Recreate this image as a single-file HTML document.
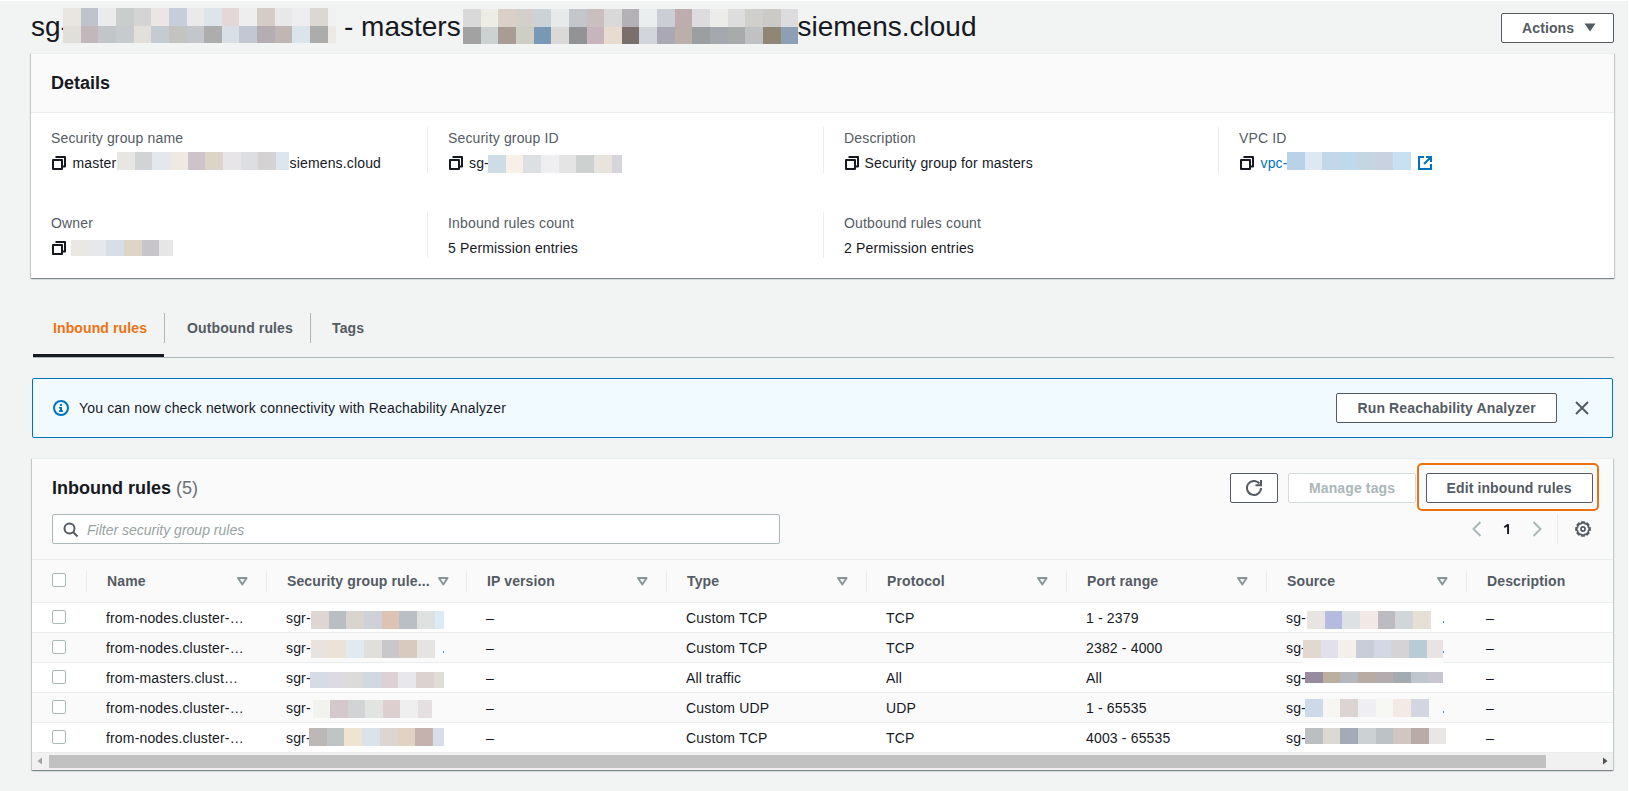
<!DOCTYPE html><html><head><meta charset="utf-8"><style>
html,body{margin:0;padding:0;}
body{width:1629px;height:791px;position:relative;overflow:hidden;background:#f2f3f3;font-family:"Liberation Sans",sans-serif;}
.t{position:absolute;white-space:nowrap;line-height:1;}
</style></head><body>
<div class="t" style="left:31px;top:13.20px;font-size:28px;color:#16191f;">sg-</div>
<div style="position:absolute;left:63px;top:8px;width:18px;height:18px;background:#e9e5e1"></div>
<div style="position:absolute;left:81px;top:8px;width:17px;height:18px;background:#bfc3cc"></div>
<div style="position:absolute;left:98px;top:8px;width:18px;height:18px;background:#ebebee"></div>
<div style="position:absolute;left:116px;top:8px;width:18px;height:18px;background:#c9cdcb"></div>
<div style="position:absolute;left:134px;top:8px;width:17px;height:18px;background:#d4d4d4"></div>
<div style="position:absolute;left:151px;top:8px;width:18px;height:18px;background:#ebe6e3"></div>
<div style="position:absolute;left:169px;top:8px;width:18px;height:18px;background:#c8cdda"></div>
<div style="position:absolute;left:187px;top:8px;width:17px;height:18px;background:#eaeaea"></div>
<div style="position:absolute;left:204px;top:8px;width:18px;height:18px;background:#dde4ea"></div>
<div style="position:absolute;left:222px;top:8px;width:17px;height:18px;background:#e3d8d7"></div>
<div style="position:absolute;left:239px;top:8px;width:18px;height:18px;background:#eeeeee"></div>
<div style="position:absolute;left:257px;top:8px;width:18px;height:18px;background:#d6ccc7"></div>
<div style="position:absolute;left:275px;top:8px;width:17px;height:18px;background:#e7e8e7"></div>
<div style="position:absolute;left:292px;top:8px;width:18px;height:18px;background:#eeeef0"></div>
<div style="position:absolute;left:310px;top:8px;width:18px;height:18px;background:#dbd8d3"></div>
<div style="position:absolute;left:328px;top:8px;width:8px;height:18px;background:#f1f1f1"></div>
<div style="position:absolute;left:63px;top:26px;width:18px;height:17px;background:#e0dfda"></div>
<div style="position:absolute;left:81px;top:26px;width:17px;height:17px;background:#c2b7ba"></div>
<div style="position:absolute;left:98px;top:26px;width:18px;height:17px;background:#c3c6c9"></div>
<div style="position:absolute;left:116px;top:26px;width:18px;height:17px;background:#c6cbcd"></div>
<div style="position:absolute;left:134px;top:26px;width:17px;height:17px;background:#e3dfdb"></div>
<div style="position:absolute;left:151px;top:26px;width:18px;height:17px;background:#c4cbd2"></div>
<div style="position:absolute;left:169px;top:26px;width:18px;height:17px;background:#c3c4c2"></div>
<div style="position:absolute;left:187px;top:26px;width:17px;height:17px;background:#c3c6ca"></div>
<div style="position:absolute;left:204px;top:26px;width:18px;height:17px;background:#aeadae"></div>
<div style="position:absolute;left:222px;top:26px;width:17px;height:17px;background:#d8e0e6"></div>
<div style="position:absolute;left:239px;top:26px;width:18px;height:17px;background:#c1c7d3"></div>
<div style="position:absolute;left:257px;top:26px;width:18px;height:17px;background:#b4aeb3"></div>
<div style="position:absolute;left:275px;top:26px;width:17px;height:17px;background:#c0b6b4"></div>
<div style="position:absolute;left:292px;top:26px;width:18px;height:17px;background:#d9e4eb"></div>
<div style="position:absolute;left:310px;top:26px;width:18px;height:17px;background:#acadab"></div>
<div style="position:absolute;left:328px;top:26px;width:8px;height:17px;background:#ede9e5"></div>
<div class="t" style="left:344px;top:13.20px;font-size:28px;color:#16191f;">- masters</div>
<div style="position:absolute;left:463px;top:9px;width:18px;height:18px;background:#d9d9d9"></div>
<div style="position:absolute;left:481px;top:9px;width:17px;height:18px;background:#edede5"></div>
<div style="position:absolute;left:498px;top:9px;width:18px;height:18px;background:#d9d0ca"></div>
<div style="position:absolute;left:516px;top:9px;width:18px;height:18px;background:#d3d0cc"></div>
<div style="position:absolute;left:534px;top:9px;width:17px;height:18px;background:#ccd3d7"></div>
<div style="position:absolute;left:551px;top:9px;width:18px;height:18px;background:#e6eaea"></div>
<div style="position:absolute;left:569px;top:9px;width:18px;height:18px;background:#c3c6cb"></div>
<div style="position:absolute;left:587px;top:9px;width:17px;height:18px;background:#cbbebe"></div>
<div style="position:absolute;left:604px;top:9px;width:18px;height:18px;background:#d8d9d8"></div>
<div style="position:absolute;left:622px;top:9px;width:17px;height:18px;background:#b3b0b6"></div>
<div style="position:absolute;left:639px;top:9px;width:18px;height:18px;background:#eaeeee"></div>
<div style="position:absolute;left:657px;top:9px;width:18px;height:18px;background:#ccced6"></div>
<div style="position:absolute;left:675px;top:9px;width:17px;height:18px;background:#bfadad"></div>
<div style="position:absolute;left:692px;top:9px;width:18px;height:18px;background:#dcdcdf"></div>
<div style="position:absolute;left:710px;top:9px;width:18px;height:18px;background:#ececea"></div>
<div style="position:absolute;left:728px;top:9px;width:17px;height:18px;background:#dcdddc"></div>
<div style="position:absolute;left:745px;top:9px;width:18px;height:18px;background:#cfd0cb"></div>
<div style="position:absolute;left:763px;top:9px;width:18px;height:18px;background:#cbcac7"></div>
<div style="position:absolute;left:781px;top:9px;width:17px;height:18px;background:#dcdcdf"></div>
<div style="position:absolute;left:463px;top:27px;width:18px;height:17px;background:#a2a2a2"></div>
<div style="position:absolute;left:481px;top:27px;width:17px;height:17px;background:#ccd1d2"></div>
<div style="position:absolute;left:498px;top:27px;width:18px;height:17px;background:#a89c94"></div>
<div style="position:absolute;left:516px;top:27px;width:18px;height:17px;background:#cfcec5"></div>
<div style="position:absolute;left:534px;top:27px;width:17px;height:17px;background:#7799b5"></div>
<div style="position:absolute;left:551px;top:27px;width:18px;height:17px;background:#dad9d8"></div>
<div style="position:absolute;left:569px;top:27px;width:18px;height:17px;background:#929395"></div>
<div style="position:absolute;left:587px;top:27px;width:17px;height:17px;background:#c7b5bd"></div>
<div style="position:absolute;left:604px;top:27px;width:18px;height:17px;background:#e8dcd0"></div>
<div style="position:absolute;left:622px;top:27px;width:17px;height:17px;background:#7b6f6b"></div>
<div style="position:absolute;left:639px;top:27px;width:18px;height:17px;background:#d2d6da"></div>
<div style="position:absolute;left:657px;top:27px;width:18px;height:17px;background:#a9a8b4"></div>
<div style="position:absolute;left:675px;top:27px;width:17px;height:17px;background:#bcaea9"></div>
<div style="position:absolute;left:692px;top:27px;width:18px;height:17px;background:#9b9fa2"></div>
<div style="position:absolute;left:710px;top:27px;width:18px;height:17px;background:#a6a8b0"></div>
<div style="position:absolute;left:728px;top:27px;width:17px;height:17px;background:#a7abab"></div>
<div style="position:absolute;left:745px;top:27px;width:18px;height:17px;background:#bfc1c2"></div>
<div style="position:absolute;left:763px;top:27px;width:18px;height:17px;background:#8f8673"></div>
<div style="position:absolute;left:781px;top:27px;width:17px;height:17px;background:#8c9fb5"></div>
<div class="t" style="left:797.5px;top:13.20px;font-size:28px;color:#16191f;">siemens.cloud</div>
<div style="position:absolute;left:1501px;top:13px;width:113px;height:30px;box-sizing:border-box;border:1px solid #545b64;border-radius:2px;background:#fff"></div>
<div class="t" style="left:1522px;top:21.05px;font-size:14px;color:#545b64;font-weight:bold;letter-spacing:0.12px;">Actions</div>
<svg width="12" height="9" viewBox="0 0 12 9" style="position:absolute;left:1584px;top:23px"><path d="M0.5 0.5h11L6 8.5z" fill="#545b64"/></svg>
<div style="position:absolute;left:31px;top:53px;width:1583px;height:225px;box-sizing:border-box;border-top:1px solid #eaeded;background:#fff;box-shadow:0 1px 1px 0 rgba(0,28,36,.3),1px 1px 1px 0 rgba(0,28,36,.15),-1px 1px 1px 0 rgba(0,28,36,.15)"></div>
<div style="position:absolute;left:31px;top:54px;width:1583px;height:58px;background:#fafafa;border-bottom:1px solid #eaeded"></div>
<div class="t" style="left:51px;top:73.56px;font-size:18px;color:#16191f;font-weight:bold;">Details</div>
<div style="position:absolute;left:427px;top:127px;width:1px;height:46px;background:#eaeded"></div>
<div style="position:absolute;left:427px;top:212px;width:1px;height:46px;background:#eaeded"></div>
<div style="position:absolute;left:823px;top:127px;width:1px;height:46px;background:#eaeded"></div>
<div style="position:absolute;left:823px;top:212px;width:1px;height:46px;background:#eaeded"></div>
<div style="position:absolute;left:1218px;top:127px;width:1px;height:46px;background:#eaeded"></div>
<div class="t" style="left:51px;top:131.35px;font-size:14px;color:#545b64;letter-spacing:0.16px;">Security group name</div>
<svg width="14" height="14" viewBox="0 0 14 14" style="position:absolute;left:52px;top:156px"><path d="M3.5 1h9.5v9.5h-3M1 4h9v9H1z" fill="none" stroke="#16191f" stroke-width="2" stroke-linejoin="round"/></svg>
<div class="t" style="left:72.5px;top:156.15px;font-size:14px;color:#16191f;letter-spacing:0.16px;">master</div>
<div style="position:absolute;left:117px;top:152px;width:18px;height:18px;background:#e8e6e2"></div>
<div style="position:absolute;left:135px;top:152px;width:17px;height:18px;background:#d0d4d7"></div>
<div style="position:absolute;left:152px;top:152px;width:18px;height:18px;background:#e3e8ef"></div>
<div style="position:absolute;left:170px;top:152px;width:18px;height:18px;background:#efe9e2"></div>
<div style="position:absolute;left:188px;top:152px;width:17px;height:18px;background:#cdc3cb"></div>
<div style="position:absolute;left:205px;top:152px;width:18px;height:18px;background:#dcd3c9"></div>
<div style="position:absolute;left:223px;top:152px;width:18px;height:18px;background:#e7e5e8"></div>
<div style="position:absolute;left:241px;top:152px;width:17px;height:18px;background:#dddee2"></div>
<div style="position:absolute;left:258px;top:152px;width:18px;height:18px;background:#d4d2d3"></div>
<div style="position:absolute;left:276px;top:152px;width:13px;height:18px;background:#dde6ee"></div>
<div class="t" style="left:289.5px;top:156.15px;font-size:14px;color:#16191f;letter-spacing:0.16px;">siemens.cloud</div>
<div class="t" style="left:448px;top:131.35px;font-size:14px;color:#545b64;letter-spacing:0.16px;">Security group ID</div>
<svg width="14" height="14" viewBox="0 0 14 14" style="position:absolute;left:449px;top:156px"><path d="M3.5 1h9.5v9.5h-3M1 4h9v9H1z" fill="none" stroke="#16191f" stroke-width="2" stroke-linejoin="round"/></svg>
<div class="t" style="left:469px;top:156.15px;font-size:14px;color:#16191f;letter-spacing:0.16px;">sg-</div>
<div style="position:absolute;left:488px;top:155px;width:18px;height:18px;background:#cddde8"></div>
<div style="position:absolute;left:506px;top:155px;width:17px;height:18px;background:#f8f0e6"></div>
<div style="position:absolute;left:523px;top:155px;width:18px;height:18px;background:#dce0e3"></div>
<div style="position:absolute;left:541px;top:155px;width:18px;height:18px;background:#efeff1"></div>
<div style="position:absolute;left:559px;top:155px;width:17px;height:18px;background:#e4e4e4"></div>
<div style="position:absolute;left:576px;top:155px;width:18px;height:18px;background:#cdd1d0"></div>
<div style="position:absolute;left:594px;top:155px;width:18px;height:18px;background:#e8e3dc"></div>
<div style="position:absolute;left:612px;top:155px;width:10px;height:18px;background:#d6d5db"></div>
<div class="t" style="left:844px;top:131.35px;font-size:14px;color:#545b64;letter-spacing:0.16px;">Description</div>
<svg width="14" height="14" viewBox="0 0 14 14" style="position:absolute;left:845px;top:156px"><path d="M3.5 1h9.5v9.5h-3M1 4h9v9H1z" fill="none" stroke="#16191f" stroke-width="2" stroke-linejoin="round"/></svg>
<div class="t" style="left:864.5px;top:156.15px;font-size:14px;color:#16191f;letter-spacing:0.16px;">Security group for masters</div>
<div class="t" style="left:1239px;top:131.35px;font-size:14px;color:#545b64;letter-spacing:0.16px;">VPC ID</div>
<svg width="14" height="14" viewBox="0 0 14 14" style="position:absolute;left:1240px;top:156px"><path d="M3.5 1h9.5v9.5h-3M1 4h9v9H1z" fill="none" stroke="#16191f" stroke-width="2" stroke-linejoin="round"/></svg>
<div class="t" style="left:1260.5px;top:156.15px;font-size:14px;color:#0073bb;letter-spacing:0.16px;">vpc-</div>
<div style="position:absolute;left:1287px;top:152px;width:18px;height:18px;background:#b8d2e8"></div>
<div style="position:absolute;left:1305px;top:152px;width:17px;height:18px;background:#dce8f2"></div>
<div style="position:absolute;left:1322px;top:152px;width:18px;height:18px;background:#c2d7ea"></div>
<div style="position:absolute;left:1340px;top:152px;width:18px;height:18px;background:#bed9e9"></div>
<div style="position:absolute;left:1358px;top:152px;width:17px;height:18px;background:#c3d7e3"></div>
<div style="position:absolute;left:1375px;top:152px;width:18px;height:18px;background:#c9d2e1"></div>
<div style="position:absolute;left:1393px;top:152px;width:18px;height:18px;background:#c8e0f1"></div>
<svg width="14" height="14" viewBox="0 0 14 14" style="position:absolute;left:1418px;top:156px"><path d="M6 1H1v12h12V8M8 1h5v5M13 1L6 8" fill="none" stroke="#0073bb" stroke-width="2"/></svg>
<div class="t" style="left:51px;top:216.35px;font-size:14px;color:#545b64;letter-spacing:0.16px;">Owner</div>
<svg width="14" height="14" viewBox="0 0 14 14" style="position:absolute;left:52px;top:241px"><path d="M3.5 1h9.5v9.5h-3M1 4h9v9H1z" fill="none" stroke="#16191f" stroke-width="2" stroke-linejoin="round"/></svg>
<div style="position:absolute;left:71px;top:240px;width:18px;height:16px;background:#ebe8e3"></div>
<div style="position:absolute;left:89px;top:240px;width:17px;height:16px;background:#e5e9ec"></div>
<div style="position:absolute;left:106px;top:240px;width:18px;height:16px;background:#d6dee6"></div>
<div style="position:absolute;left:124px;top:240px;width:18px;height:16px;background:#ded5c9"></div>
<div style="position:absolute;left:142px;top:240px;width:17px;height:16px;background:#c7c5ca"></div>
<div style="position:absolute;left:159px;top:240px;width:14px;height:16px;background:#e6e6e6"></div>
<div class="t" style="left:448px;top:216.35px;font-size:14px;color:#545b64;letter-spacing:0.16px;">Inbound rules count</div>
<div class="t" style="left:448px;top:241.25px;font-size:14px;color:#16191f;letter-spacing:0.16px;">5 Permission entries</div>
<div class="t" style="left:844px;top:216.35px;font-size:14px;color:#545b64;letter-spacing:0.16px;">Outbound rules count</div>
<div class="t" style="left:844px;top:241.25px;font-size:14px;color:#16191f;letter-spacing:0.16px;">2 Permission entries</div>
<div style="position:absolute;left:33px;top:357px;width:1581px;height:1px;background:#aab7b8"></div>
<div style="position:absolute;left:33px;top:354px;width:131px;height:3px;background:#16191f"></div>
<div style="position:absolute;left:164px;top:313px;width:1px;height:30px;background:#aab7b8"></div>
<div style="position:absolute;left:310px;top:313px;width:1px;height:30px;background:#aab7b8"></div>
<div class="t" style="left:53px;top:320.95px;font-size:14px;color:#ec7211;font-weight:bold;letter-spacing:0.12px;">Inbound rules</div>
<div class="t" style="left:187px;top:320.95px;font-size:14px;color:#545b64;font-weight:bold;letter-spacing:0.12px;">Outbound rules</div>
<div class="t" style="left:332px;top:320.95px;font-size:14px;color:#545b64;font-weight:bold;letter-spacing:0.12px;">Tags</div>
<div style="position:absolute;left:32px;top:378px;width:1581px;height:60px;box-sizing:border-box;border:1px solid #0073bb;border-radius:2px;background:#f1faff"></div>
<svg width="16" height="16" viewBox="0 0 16 16" style="position:absolute;left:53px;top:400px"><circle cx="8" cy="8" r="7" fill="none" stroke="#0073bb" stroke-width="2"/><rect x="7" y="4" width="2" height="1.9" fill="#0073bb"/><rect x="6" y="7" width="3" height="1.5" fill="#0073bb"/><rect x="7" y="7" width="2" height="4.5" fill="#0073bb"/><rect x="6" y="10.2" width="4" height="1.7" fill="#0073bb"/></svg>
<div class="t" style="left:79px;top:401.05px;font-size:14px;color:#16191f;letter-spacing:0.16px;">You can now check network connectivity with Reachability Analyzer</div>
<div style="position:absolute;left:1336px;top:393px;width:221px;height:30px;box-sizing:border-box;border:1px solid #545b64;border-radius:2px;background:#fff"></div>
<div class="t" style="left:1357.5px;top:401.05px;font-size:14px;color:#545b64;font-weight:bold;letter-spacing:0.12px;">Run Reachability Analyzer</div>
<svg width="14" height="14" viewBox="0 0 14 14" style="position:absolute;left:1575px;top:401px"><path d="M1 1l12 12M13 1L1 13" fill="none" stroke="#545b64" stroke-width="2"/></svg>
<div style="position:absolute;left:32px;top:458px;width:1581px;height:312px;box-sizing:border-box;border-top:1px solid #eaeded;background:#fafafa;box-shadow:0 1px 1px 0 rgba(0,28,36,.3),1px 1px 1px 0 rgba(0,28,36,.15),-1px 1px 1px 0 rgba(0,28,36,.15)"></div>
<div class="t" style="left:52px;top:478.96px;font-size:18px;color:#16191f;font-weight:bold;">Inbound rules <span style="font-weight:normal;color:#687078">(5)</span></div>
<div style="position:absolute;left:1230px;top:473px;width:48px;height:30px;box-sizing:border-box;border:1px solid #545b64;border-radius:2px;background:#fff"></div>
<svg width="16" height="16" viewBox="0 0 16 16" style="position:absolute;left:1246px;top:480px"><path d="M15 8A7 7 0 1 1 13.4 3.5" fill="none" stroke="#545b64" stroke-width="2"/><path d="M9.5 5.2H15V0" fill="none" stroke="#545b64" stroke-width="2"/></svg>
<div style="position:absolute;left:1288px;top:473px;width:128px;height:30px;box-sizing:border-box;border:1px solid #d5dbdb;border-radius:2px;background:#fff"></div>
<div class="t" style="left:1309px;top:481.45px;font-size:14px;color:#aab7b8;font-weight:bold;letter-spacing:0.12px;">Manage tags</div>
<div style="position:absolute;left:1417px;top:463px;width:182px;height:48px;box-sizing:border-box;border:2px solid #ec7211;border-radius:5px"></div>
<div style="position:absolute;left:1426px;top:473px;width:167px;height:30px;box-sizing:border-box;border:1px solid #545b64;border-radius:2px;background:#fff"></div>
<div class="t" style="left:1446.5px;top:481.45px;font-size:14px;color:#545b64;font-weight:bold;letter-spacing:0.12px;">Edit inbound rules</div>
<div style="position:absolute;left:52px;top:514px;width:728px;height:30px;box-sizing:border-box;border:1px solid #aab7b8;border-radius:2px;background:#fff"></div>
<svg width="16" height="16" viewBox="0 0 16 16" style="position:absolute;left:62.5px;top:521.5px"><circle cx="6.5" cy="6.5" r="5" fill="none" stroke="#545b64" stroke-width="2"/><path d="M10 10l4.5 4.5" stroke="#545b64" stroke-width="2"/></svg>
<div class="t" style="left:87px;top:522.65px;font-size:14px;color:#97a3a4;font-style:italic;">Filter security group rules</div>
<svg width="10" height="16" viewBox="0 0 10 16" style="position:absolute;left:1472px;top:521px"><path d="M8.5 1L1.5 8l7 7" fill="none" stroke="#aab7b8" stroke-width="2"/></svg>
<svg width="8" height="12" viewBox="0 0 8 12" style="position:absolute;left:1503px;top:523px"><path d="M4.1 1.3h1.95v9.8H4.1z" fill="#16191f"/><path d="M1.3 4.2L5.2 1.6" stroke="#16191f" stroke-width="1.9"/></svg>
<svg width="10" height="16" viewBox="0 0 10 16" style="position:absolute;left:1532px;top:521px"><path d="M1.5 1l7 7-7 7" fill="none" stroke="#aab7b8" stroke-width="2"/></svg>
<div style="position:absolute;left:1557px;top:514px;width:1px;height:30px;background:#eaeded"></div>
<svg width="16" height="16" viewBox="0 0 16 16" style="position:absolute;left:1575px;top:521px"><path d="M5.63 1.84 L6.34 0.17 L9.66 0.17 L10.37 1.84 L10.68 1.97 L12.36 1.29 L14.71 3.64 L14.03 5.32 L14.16 5.63 L15.83 6.34 L15.83 9.66 L14.16 10.37 L14.03 10.68 L14.71 12.36 L12.36 14.71 L10.68 14.03 L10.37 14.16 L9.66 15.83 L6.34 15.83 L5.63 14.16 L5.32 14.03 L3.64 14.71 L1.29 12.36 L1.97 10.68 L1.84 10.37 L0.17 9.66 L0.17 6.34 L1.84 5.63 L1.97 5.32 L1.29 3.64 L3.64 1.29 L5.32 1.97ZM6.31 3.83 L6.79 2.74 L9.21 2.74 L9.69 3.83 L9.76 3.86 L10.86 3.42 L12.58 5.14 L12.14 6.24 L12.17 6.31 L13.26 6.79 L13.26 9.21 L12.17 9.69 L12.14 9.76 L12.58 10.86 L10.86 12.58 L9.76 12.14 L9.69 12.17 L9.21 13.26 L6.79 13.26 L6.31 12.17 L6.24 12.14 L5.14 12.58 L3.42 10.86 L3.86 9.76 L3.83 9.69 L2.74 9.21 L2.74 6.79 L3.83 6.31 L3.86 6.24 L3.42 5.14 L5.14 3.42 L6.24 3.86ZM10.9 8A2.9 2.9 0 1 0 5.1 8A2.9 2.9 0 1 0 10.9 8ZM9.2 8A1.2 1.2 0 1 0 6.8 8A1.2 1.2 0 1 0 9.2 8Z" fill="#545b64" fill-rule="evenodd"/></svg>
<div style="position:absolute;left:32px;top:559px;width:1581px;height:1px;background:#eaeded"></div>
<div style="position:absolute;left:32px;top:602px;width:1581px;height:1px;background:#eaeded"></div>
<div class="t" style="left:107px;top:574.15px;font-size:14px;color:#545b64;font-weight:bold;letter-spacing:0.12px;">Name</div>
<svg width="11" height="9" viewBox="0 0 11 9" style="position:absolute;left:236.5px;top:577px"><path d="M1 1h8.6L5.3 7.6z" fill="none" stroke="#879596" stroke-width="1.9" stroke-linejoin="round"/></svg>
<div class="t" style="left:287px;top:574.15px;font-size:14px;color:#545b64;font-weight:bold;letter-spacing:0.12px;">Security group rule...</div>
<svg width="11" height="9" viewBox="0 0 11 9" style="position:absolute;left:437.5px;top:577px"><path d="M1 1h8.6L5.3 7.6z" fill="none" stroke="#879596" stroke-width="1.9" stroke-linejoin="round"/></svg>
<div class="t" style="left:487px;top:574.15px;font-size:14px;color:#545b64;font-weight:bold;letter-spacing:0.12px;">IP version</div>
<svg width="11" height="9" viewBox="0 0 11 9" style="position:absolute;left:637.0px;top:577px"><path d="M1 1h8.6L5.3 7.6z" fill="none" stroke="#879596" stroke-width="1.9" stroke-linejoin="round"/></svg>
<div class="t" style="left:687px;top:574.15px;font-size:14px;color:#545b64;font-weight:bold;letter-spacing:0.12px;">Type</div>
<svg width="11" height="9" viewBox="0 0 11 9" style="position:absolute;left:837.0px;top:577px"><path d="M1 1h8.6L5.3 7.6z" fill="none" stroke="#879596" stroke-width="1.9" stroke-linejoin="round"/></svg>
<div class="t" style="left:887px;top:574.15px;font-size:14px;color:#545b64;font-weight:bold;letter-spacing:0.12px;">Protocol</div>
<svg width="11" height="9" viewBox="0 0 11 9" style="position:absolute;left:1037.0px;top:577px"><path d="M1 1h8.6L5.3 7.6z" fill="none" stroke="#879596" stroke-width="1.9" stroke-linejoin="round"/></svg>
<div class="t" style="left:1087px;top:574.15px;font-size:14px;color:#545b64;font-weight:bold;letter-spacing:0.12px;">Port range</div>
<svg width="11" height="9" viewBox="0 0 11 9" style="position:absolute;left:1237.0px;top:577px"><path d="M1 1h8.6L5.3 7.6z" fill="none" stroke="#879596" stroke-width="1.9" stroke-linejoin="round"/></svg>
<div class="t" style="left:1287px;top:574.15px;font-size:14px;color:#545b64;font-weight:bold;letter-spacing:0.12px;">Source</div>
<svg width="11" height="9" viewBox="0 0 11 9" style="position:absolute;left:1437.0px;top:577px"><path d="M1 1h8.6L5.3 7.6z" fill="none" stroke="#879596" stroke-width="1.9" stroke-linejoin="round"/></svg>
<div class="t" style="left:1487px;top:574.15px;font-size:14px;color:#545b64;font-weight:bold;letter-spacing:0.12px;">Description</div>
<div style="position:absolute;left:86px;top:571px;width:1px;height:21px;background:#eaeded"></div>
<div style="position:absolute;left:266px;top:571px;width:1px;height:21px;background:#eaeded"></div>
<div style="position:absolute;left:466px;top:571px;width:1px;height:21px;background:#eaeded"></div>
<div style="position:absolute;left:666px;top:571px;width:1px;height:21px;background:#eaeded"></div>
<div style="position:absolute;left:866px;top:571px;width:1px;height:21px;background:#eaeded"></div>
<div style="position:absolute;left:1066px;top:571px;width:1px;height:21px;background:#eaeded"></div>
<div style="position:absolute;left:1266px;top:571px;width:1px;height:21px;background:#eaeded"></div>
<div style="position:absolute;left:1466px;top:571px;width:1px;height:21px;background:#eaeded"></div>
<div style="position:absolute;left:52px;top:573px;width:14px;height:14px;box-sizing:border-box;border:1px solid #aab7b8;border-radius:2px;background:#fff"></div>
<div style="position:absolute;left:32px;top:603px;width:1581px;height:29px;background:#ffffff;border-bottom:1px solid #eaeded"></div>
<div style="position:absolute;left:52px;top:610px;width:14px;height:14px;box-sizing:border-box;border:1px solid #aab7b8;border-radius:2px;background:#fff"></div>
<div class="t" style="left:106px;top:611.15px;font-size:14px;color:#16191f;letter-spacing:0.16px;">from-nodes.cluster-…</div>
<div class="t" style="left:286px;top:611.15px;font-size:14px;color:#16191f;letter-spacing:0.16px;">sgr-</div>
<div class="t" style="left:486px;top:611.15px;font-size:14px;color:#16191f;letter-spacing:0.16px;">–</div>
<div class="t" style="left:686px;top:611.15px;font-size:14px;color:#16191f;letter-spacing:0.16px;">Custom TCP</div>
<div class="t" style="left:886px;top:611.15px;font-size:14px;color:#16191f;letter-spacing:0.16px;">TCP</div>
<div class="t" style="left:1086px;top:611.15px;font-size:14px;color:#16191f;letter-spacing:0.16px;">1 - 2379</div>
<div class="t" style="left:1286px;top:611.15px;font-size:14px;color:#16191f;letter-spacing:0.16px;">sg-</div>
<div class="t" style="left:1486px;top:611.15px;font-size:14px;color:#16191f;letter-spacing:0.16px;">–</div>
<div style="position:absolute;left:32px;top:633px;width:1581px;height:29px;background:#fafafa;border-bottom:1px solid #eaeded"></div>
<div style="position:absolute;left:52px;top:640px;width:14px;height:14px;box-sizing:border-box;border:1px solid #aab7b8;border-radius:2px;background:#fff"></div>
<div class="t" style="left:106px;top:641.15px;font-size:14px;color:#16191f;letter-spacing:0.16px;">from-nodes.cluster-…</div>
<div class="t" style="left:286px;top:641.15px;font-size:14px;color:#16191f;letter-spacing:0.16px;">sgr-</div>
<div class="t" style="left:486px;top:641.15px;font-size:14px;color:#16191f;letter-spacing:0.16px;">–</div>
<div class="t" style="left:686px;top:641.15px;font-size:14px;color:#16191f;letter-spacing:0.16px;">Custom TCP</div>
<div class="t" style="left:886px;top:641.15px;font-size:14px;color:#16191f;letter-spacing:0.16px;">TCP</div>
<div class="t" style="left:1086px;top:641.15px;font-size:14px;color:#16191f;letter-spacing:0.16px;">2382 - 4000</div>
<div class="t" style="left:1286px;top:641.15px;font-size:14px;color:#16191f;letter-spacing:0.16px;">sg-</div>
<div class="t" style="left:1486px;top:641.15px;font-size:14px;color:#16191f;letter-spacing:0.16px;">–</div>
<div style="position:absolute;left:32px;top:663px;width:1581px;height:29px;background:#ffffff;border-bottom:1px solid #eaeded"></div>
<div style="position:absolute;left:52px;top:670px;width:14px;height:14px;box-sizing:border-box;border:1px solid #aab7b8;border-radius:2px;background:#fff"></div>
<div class="t" style="left:106px;top:671.15px;font-size:14px;color:#16191f;letter-spacing:0.16px;">from-masters.clust…</div>
<div class="t" style="left:286px;top:671.15px;font-size:14px;color:#16191f;letter-spacing:0.16px;">sgr-</div>
<div class="t" style="left:486px;top:671.15px;font-size:14px;color:#16191f;letter-spacing:0.16px;">–</div>
<div class="t" style="left:686px;top:671.15px;font-size:14px;color:#16191f;letter-spacing:0.16px;">All traffic</div>
<div class="t" style="left:886px;top:671.15px;font-size:14px;color:#16191f;letter-spacing:0.16px;">All</div>
<div class="t" style="left:1086px;top:671.15px;font-size:14px;color:#16191f;letter-spacing:0.16px;">All</div>
<div class="t" style="left:1286px;top:671.15px;font-size:14px;color:#16191f;letter-spacing:0.16px;">sg-</div>
<div class="t" style="left:1486px;top:671.15px;font-size:14px;color:#16191f;letter-spacing:0.16px;">–</div>
<div style="position:absolute;left:32px;top:693px;width:1581px;height:29px;background:#fafafa;border-bottom:1px solid #eaeded"></div>
<div style="position:absolute;left:52px;top:700px;width:14px;height:14px;box-sizing:border-box;border:1px solid #aab7b8;border-radius:2px;background:#fff"></div>
<div class="t" style="left:106px;top:701.15px;font-size:14px;color:#16191f;letter-spacing:0.16px;">from-nodes.cluster-…</div>
<div class="t" style="left:286px;top:701.15px;font-size:14px;color:#16191f;letter-spacing:0.16px;">sgr-</div>
<div class="t" style="left:486px;top:701.15px;font-size:14px;color:#16191f;letter-spacing:0.16px;">–</div>
<div class="t" style="left:686px;top:701.15px;font-size:14px;color:#16191f;letter-spacing:0.16px;">Custom UDP</div>
<div class="t" style="left:886px;top:701.15px;font-size:14px;color:#16191f;letter-spacing:0.16px;">UDP</div>
<div class="t" style="left:1086px;top:701.15px;font-size:14px;color:#16191f;letter-spacing:0.16px;">1 - 65535</div>
<div class="t" style="left:1286px;top:701.15px;font-size:14px;color:#16191f;letter-spacing:0.16px;">sg-</div>
<div class="t" style="left:1486px;top:701.15px;font-size:14px;color:#16191f;letter-spacing:0.16px;">–</div>
<div style="position:absolute;left:32px;top:723px;width:1581px;height:29px;background:#ffffff;border-bottom:1px solid #eaeded"></div>
<div style="position:absolute;left:52px;top:730px;width:14px;height:14px;box-sizing:border-box;border:1px solid #aab7b8;border-radius:2px;background:#fff"></div>
<div class="t" style="left:106px;top:731.15px;font-size:14px;color:#16191f;letter-spacing:0.16px;">from-nodes.cluster-…</div>
<div class="t" style="left:286px;top:731.15px;font-size:14px;color:#16191f;letter-spacing:0.16px;">sgr-</div>
<div class="t" style="left:486px;top:731.15px;font-size:14px;color:#16191f;letter-spacing:0.16px;">–</div>
<div class="t" style="left:686px;top:731.15px;font-size:14px;color:#16191f;letter-spacing:0.16px;">Custom TCP</div>
<div class="t" style="left:886px;top:731.15px;font-size:14px;color:#16191f;letter-spacing:0.16px;">TCP</div>
<div class="t" style="left:1086px;top:731.15px;font-size:14px;color:#16191f;letter-spacing:0.16px;">4003 - 65535</div>
<div class="t" style="left:1286px;top:731.15px;font-size:14px;color:#16191f;letter-spacing:0.16px;">sg-</div>
<div class="t" style="left:1486px;top:731.15px;font-size:14px;color:#16191f;letter-spacing:0.16px;">–</div>
<div style="position:absolute;left:311px;top:611px;width:18px;height:18px;background:#dfd6d3"></div>
<div style="position:absolute;left:329px;top:611px;width:17px;height:18px;background:#b8bec4"></div>
<div style="position:absolute;left:346px;top:611px;width:18px;height:18px;background:#dad4cf"></div>
<div style="position:absolute;left:364px;top:611px;width:18px;height:18px;background:#cfd1da"></div>
<div style="position:absolute;left:382px;top:611px;width:17px;height:18px;background:#dcc3b3"></div>
<div style="position:absolute;left:399px;top:611px;width:18px;height:18px;background:#babfc6"></div>
<div style="position:absolute;left:417px;top:611px;width:18px;height:18px;background:#dfe1e0"></div>
<div style="position:absolute;left:435px;top:611px;width:9px;height:18px;background:#dcecf6"></div>
<div style="position:absolute;left:311px;top:640px;width:18px;height:18px;background:#e8e3de"></div>
<div style="position:absolute;left:329px;top:640px;width:17px;height:18px;background:#ede2d6"></div>
<div style="position:absolute;left:346px;top:640px;width:18px;height:18px;background:#e1e9f1"></div>
<div style="position:absolute;left:364px;top:640px;width:18px;height:18px;background:#e1dfda"></div>
<div style="position:absolute;left:382px;top:640px;width:17px;height:18px;background:#c9c7c9"></div>
<div style="position:absolute;left:399px;top:640px;width:18px;height:18px;background:#d9cac0"></div>
<div style="position:absolute;left:417px;top:640px;width:18px;height:18px;background:#e6e4e2"></div>
<div style="position:absolute;left:310px;top:672px;width:18px;height:16px;background:#d6dce4"></div>
<div style="position:absolute;left:328px;top:672px;width:17px;height:16px;background:#dcdbe4"></div>
<div style="position:absolute;left:345px;top:672px;width:18px;height:16px;background:#dcdbd7"></div>
<div style="position:absolute;left:363px;top:672px;width:18px;height:16px;background:#d0d8e2"></div>
<div style="position:absolute;left:381px;top:672px;width:17px;height:16px;background:#dcd2d6"></div>
<div style="position:absolute;left:398px;top:672px;width:18px;height:16px;background:#e8e7ec"></div>
<div style="position:absolute;left:416px;top:672px;width:18px;height:16px;background:#dcd2cf"></div>
<div style="position:absolute;left:434px;top:672px;width:10px;height:16px;background:#e2dcd7"></div>
<div style="position:absolute;left:313px;top:700px;width:17px;height:18px;background:#f2f2ee"></div>
<div style="position:absolute;left:330px;top:700px;width:18px;height:18px;background:#d3c9cc"></div>
<div style="position:absolute;left:348px;top:700px;width:17px;height:18px;background:#d1d3d5"></div>
<div style="position:absolute;left:365px;top:700px;width:18px;height:18px;background:#e2e4e2"></div>
<div style="position:absolute;left:383px;top:700px;width:17px;height:18px;background:#ddcfd0"></div>
<div style="position:absolute;left:400px;top:700px;width:18px;height:18px;background:#efefef"></div>
<div style="position:absolute;left:418px;top:700px;width:14px;height:18px;background:#e6dfe1"></div>
<div style="position:absolute;left:309px;top:728px;width:18px;height:18px;background:#bdb8b6"></div>
<div style="position:absolute;left:327px;top:728px;width:17px;height:18px;background:#bfc4c6"></div>
<div style="position:absolute;left:344px;top:728px;width:18px;height:18px;background:#f1e3d2"></div>
<div style="position:absolute;left:362px;top:728px;width:18px;height:18px;background:#dae2ea"></div>
<div style="position:absolute;left:380px;top:728px;width:17px;height:18px;background:#dbd6d2"></div>
<div style="position:absolute;left:397px;top:728px;width:18px;height:18px;background:#e1d2c4"></div>
<div style="position:absolute;left:415px;top:728px;width:18px;height:18px;background:#c5b1ae"></div>
<div style="position:absolute;left:433px;top:728px;width:11px;height:18px;background:#d8dde8"></div>
<div style="position:absolute;left:1307px;top:611px;width:18px;height:18px;background:#e8e5e0"></div>
<div style="position:absolute;left:1325px;top:611px;width:17px;height:18px;background:#b4bbdf"></div>
<div style="position:absolute;left:1342px;top:611px;width:18px;height:18px;background:#dde1e4"></div>
<div style="position:absolute;left:1360px;top:611px;width:18px;height:18px;background:#f2e8e5"></div>
<div style="position:absolute;left:1378px;top:611px;width:17px;height:18px;background:#bbbbc0"></div>
<div style="position:absolute;left:1395px;top:611px;width:18px;height:18px;background:#d1d7d8"></div>
<div style="position:absolute;left:1413px;top:611px;width:18px;height:18px;background:#e6dfd3"></div>
<div style="position:absolute;left:1303px;top:640px;width:18px;height:18px;background:#e1d9d0"></div>
<div style="position:absolute;left:1321px;top:640px;width:17px;height:18px;background:#e2e0ea"></div>
<div style="position:absolute;left:1338px;top:640px;width:18px;height:18px;background:#f3efea"></div>
<div style="position:absolute;left:1356px;top:640px;width:18px;height:18px;background:#c9ccd9"></div>
<div style="position:absolute;left:1374px;top:640px;width:17px;height:18px;background:#d3d8e4"></div>
<div style="position:absolute;left:1391px;top:640px;width:18px;height:18px;background:#d6d3d7"></div>
<div style="position:absolute;left:1409px;top:640px;width:18px;height:18px;background:#b9ccd6"></div>
<div style="position:absolute;left:1427px;top:640px;width:16px;height:18px;background:#e9e3e3"></div>
<div style="position:absolute;left:1305px;top:672px;width:18px;height:11px;background:#978c9f"></div>
<div style="position:absolute;left:1323px;top:672px;width:17px;height:11px;background:#bbb09f"></div>
<div style="position:absolute;left:1340px;top:672px;width:18px;height:11px;background:#b4b8bd"></div>
<div style="position:absolute;left:1358px;top:672px;width:18px;height:11px;background:#b7aba4"></div>
<div style="position:absolute;left:1376px;top:672px;width:17px;height:11px;background:#b3abae"></div>
<div style="position:absolute;left:1393px;top:672px;width:18px;height:11px;background:#a4aab1"></div>
<div style="position:absolute;left:1411px;top:672px;width:17px;height:11px;background:#c0c6cd"></div>
<div style="position:absolute;left:1428px;top:672px;width:15px;height:11px;background:#c7c6d1"></div>
<div style="position:absolute;left:1305px;top:699px;width:18px;height:18px;background:#ccd9e8"></div>
<div style="position:absolute;left:1323px;top:699px;width:17px;height:18px;background:#f8f6f2"></div>
<div style="position:absolute;left:1340px;top:699px;width:18px;height:18px;background:#dcd3d3"></div>
<div style="position:absolute;left:1358px;top:699px;width:18px;height:18px;background:#efeff3"></div>
<div style="position:absolute;left:1376px;top:699px;width:17px;height:18px;background:#f7f7f3"></div>
<div style="position:absolute;left:1393px;top:699px;width:18px;height:18px;background:#f3eae5"></div>
<div style="position:absolute;left:1411px;top:699px;width:18px;height:18px;background:#d3d6e0"></div>
<div style="position:absolute;left:1305px;top:728px;width:18px;height:16px;background:#bbbfc2"></div>
<div style="position:absolute;left:1323px;top:728px;width:17px;height:16px;background:#dcd8d2"></div>
<div style="position:absolute;left:1340px;top:728px;width:18px;height:16px;background:#a3abb6"></div>
<div style="position:absolute;left:1358px;top:728px;width:18px;height:16px;background:#ccd1d4"></div>
<div style="position:absolute;left:1376px;top:728px;width:17px;height:16px;background:#bcc3c7"></div>
<div style="position:absolute;left:1393px;top:728px;width:18px;height:16px;background:#d0c7c3"></div>
<div style="position:absolute;left:1411px;top:728px;width:18px;height:16px;background:#b8aba8"></div>
<div style="position:absolute;left:1429px;top:728px;width:17px;height:16px;background:#e8e7e6"></div>
<div style="position:absolute;left:1443px;top:621px;width:1px;height:2px;background:#3d8fd6"></div>
<div style="position:absolute;left:1443px;top:651px;width:1px;height:2px;background:#3d8fd6"></div>
<div style="position:absolute;left:1443px;top:711px;width:1px;height:2px;background:#3d8fd6"></div>
<div style="position:absolute;left:443px;top:651px;width:1px;height:2px;background:#3d8fd6"></div>
<div style="position:absolute;left:1303px;top:658px;width:140px;height:7px;background:#fdfdfd"></div>
<div style="position:absolute;left:32px;top:753px;width:1581px;height:17px;background:#f1f1f1"></div>
<div style="position:absolute;left:49px;top:755px;width:1497px;height:13px;background:#c1c1c1"></div>
<svg width="8" height="8" viewBox="0 0 8 8" style="position:absolute;left:36px;top:757px"><path d="M6 0.5v7L1.5 4z" fill="#a3a3a3"/></svg>
<svg width="8" height="8" viewBox="0 0 8 8" style="position:absolute;left:1601px;top:757px"><path d="M2 0.5v7L6.5 4z" fill="#505050"/></svg>
<div style="position:absolute;left:0px;top:0px;width:1629px;height:1px;background:#ffffff"></div>
<div style="position:absolute;left:1628px;top:0px;width:1px;height:791px;background:#ffffff"></div>
</body></html>
